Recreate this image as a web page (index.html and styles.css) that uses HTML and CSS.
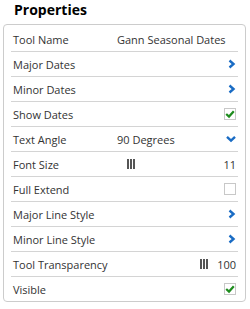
FILE: index.html
```html
<!DOCTYPE html>
<html lang="en">
<head>
    <meta charset="UTF-8">
    <title>Properties</title>
    <link rel="stylesheet" href="styles.css">
</head>
<body>
    <h1 class="title">Properties</h1>

    <div class="panel">
        <div class="row">
            <span class="label">Tool Name</span>
            <span class="value">Gann Seasonal Dates</span>
        </div>
        <div class="row">
            <span class="label">Major Dates</span>
            <span class="chevron-right"></span>
        </div>
        <div class="row">
            <span class="label">Minor Dates</span>
            <span class="chevron-right"></span>
        </div>
        <div class="row">
            <span class="label">Show Dates</span>
            <span class="checkbox checked"></span>
        </div>
        <div class="row">
            <span class="label">Text Angle</span>
            <span class="value">90 Degrees</span>
            <span class="chevron-down"></span>
        </div>
        <div class="row">
            <span class="label">Font Size</span>
            <span class="slider"><span class="grip"></span></span>
            <span class="num">11</span>
        </div>
        <div class="row">
            <span class="label">Full Extend</span>
            <span class="checkbox"></span>
        </div>
        <div class="row">
            <span class="label">Major Line Style</span>
            <span class="chevron-right"></span>
        </div>
        <div class="row">
            <span class="label">Minor Line Style</span>
            <span class="chevron-right"></span>
        </div>
        <div class="row">
            <span class="label">Tool Transparency</span>
            <span class="slider end"><span class="grip"></span></span>
            <span class="num">100</span>
        </div>
        <div class="row">
            <span class="label">Visible</span>
            <span class="checkbox checked"></span>
        </div>
    </div>
</body>
</html>
```

FILE: styles.css
```css
body {
    margin: 0;
    padding: 0 4px 0 3px;
    font-family: "Open Sans", Arial, sans-serif;
    color: #333;
    background: #fff;
}
.title {
    margin: 0;
    padding: 0 0 0 11px;
    font-size: 14px;
    line-height: 19px;
    font-weight: bold;
    color: #000;
}
.panel {
    margin-top: 5px;
    border: 1px solid #ccc;
    border-radius: 4px;
    padding: 2px 7px 0;
}
.row {
    display: flex;
    align-items: center;
    height: 24px;
    border-bottom: 1px solid #d4d4d4;
    padding: 0 2px;
    font-size: 11px;
}
.row:last-child {
    border-bottom: none;
}
.label {
    width: 104px;
    flex: none;
}
.value {
    flex: 1;
}
.chevron-right,
.chevron-down {
    margin-left: auto;
    width: 8px;
    height: 10px;
    background-repeat: no-repeat;
    background-position: center;
}
.chevron-right {
    background-image: url("data:image/svg+xml,%3Csvg xmlns='http://www.w3.org/2000/svg' width='8' height='10'%3E%3Cpath d='M1.5 1.5 L5.5 5 L1.5 8.5' fill='none' stroke='%231a6cc4' stroke-width='2.4'/%3E%3C/svg%3E");
}
.chevron-down {
    width: 10px;
    height: 8px;
    background-image: url("data:image/svg+xml,%3Csvg xmlns='http://www.w3.org/2000/svg' width='10' height='8'%3E%3Cpath d='M1 1.8 L5 5.6 L9 1.8' fill='none' stroke='%231a6cc4' stroke-width='2.4'/%3E%3C/svg%3E");
}
.checkbox {
    margin-left: auto;
    width: 10px;
    height: 10px;
    border: 1px solid #c8c8c8;
    background-repeat: no-repeat;
    background-position: center;
}
.checkbox.checked {
    background-image: url("data:image/svg+xml,%3Csvg xmlns='http://www.w3.org/2000/svg' width='10' height='10'%3E%3Cpath d='M1.2 5 L4 7.6 L8.8 2.2' fill='none' stroke='%231e8c1e' stroke-width='2.2'/%3E%3C/svg%3E");
}
.slider {
    flex: 1;
    display: flex;
    padding-left: 10px;
}
.slider.end {
    justify-content: flex-end;
    padding-left: 0;
    padding-right: 9px;
}
.grip {
    width: 8px;
    height: 10px;
    background: linear-gradient(90deg, #555 0 2px, transparent 2px 3px, #555 3px 5px, transparent 5px 6px, #555 6px 8px);
}
.num {
    margin-left: auto;
}
```
